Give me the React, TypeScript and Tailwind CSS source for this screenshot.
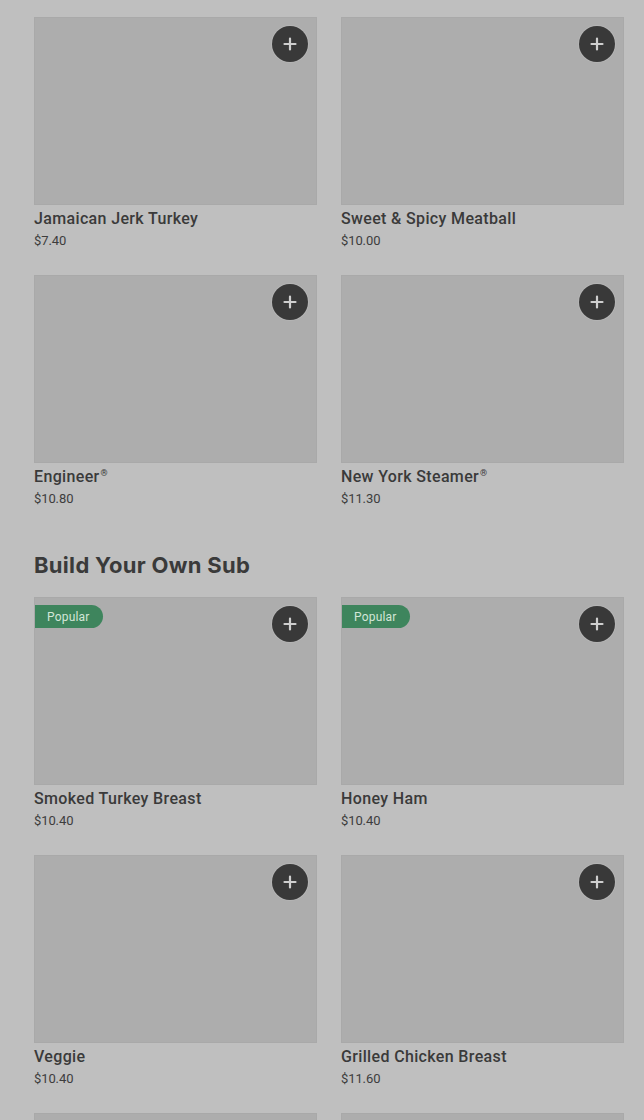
import React from 'react';

interface Item {
  name: string;
  price: string;
  popular?: boolean;
  reg?: boolean;
}

const topItems: Item[] = [
  { name: 'Jamaican Jerk Turkey', price: '$7.40' },
  { name: 'Sweet & Spicy Meatball', price: '$10.00' },
  { name: 'Engineer', price: '$10.80', reg: true },
  { name: 'New York Steamer', price: '$11.30', reg: true },
];

const buildItems: Item[] = [
  { name: 'Smoked Turkey Breast', price: '$10.40', popular: true },
  { name: 'Honey Ham', price: '$10.40', popular: true },
  { name: 'Veggie', price: '$10.40' },
  { name: 'Grilled Chicken Breast', price: '$11.60' },
  { name: '', price: '' },
  { name: '', price: '' },
];

const PlusIcon = () => (
  <svg className="w-[14px] h-[14px]" viewBox="0 0 14 14" fill="none" stroke="currentColor" strokeWidth={2.2} strokeLinecap="round">
    <path d="M7 1.5v11M1.5 7h11" />
  </svg>
);

const Card: React.FC<{ item: Item }> = ({ item }) => (
  <div className="h-[258px]">
    <div className="relative h-[188px] bg-[#adadad] border border-[#a9a9a9]">
      {item.popular && (
        <span className="absolute left-0 top-[7px] h-[23px] pl-[12px] pr-[13px] flex items-center bg-[#3e855d] text-[#d3e6d8] text-[12px] tracking-[0.2px] rounded-r-full">
          Popular
        </span>
      )}
      <button
        className="absolute right-[8px] top-[8px] w-[36px] h-[36px] rounded-full bg-[#393939] text-[#cfcfcf] flex items-center justify-center ring-1 ring-[#b5b5b5]"
        aria-label="Add"
      >
        <PlusIcon />
      </button>
    </div>
    {item.name && (
      <>
        <div className="mt-[3px] text-[16px] leading-[22px] font-medium text-[#3a3a3a] tracking-[0.35px]">
          {item.name}
          {item.reg && <sup className="text-[9px] ml-[1px] top-[-0.7em]">®</sup>}
        </div>
        <div className="mt-[1px] text-[13px] leading-[20px] text-[#3d3d3d] tracking-[-0.1px]">{item.price}</div>
      </>
    )}
  </div>
);

export default function App() {
  return (
    <div
      className="w-[644px] h-[1120px] overflow-hidden bg-[#bfbfbf] pl-[34px] pr-[20px] pt-[17px]"
      style={{ fontFamily: '"Roboto", "Liberation Sans", sans-serif' }}
    >
      <div className="grid grid-cols-2 gap-x-[24px]">
        {topItems.map((it, i) => (
          <Card key={i} item={it} />
        ))}
      </div>
      <h2
        className="mt-[18px] mb-[18px] text-[22px] leading-[28px] font-bold text-[#3a3a3a] tracking-[0.3px]"
        style={{ fontFamily: '"Inter", "Liberation Sans", sans-serif' }}
      >
        Build Your Own Sub
      </h2>
      <div className="grid grid-cols-2 gap-x-[24px]">
        {buildItems.map((it, i) => (
          <Card key={i} item={it} />
        ))}
      </div>
    </div>
  );
}
